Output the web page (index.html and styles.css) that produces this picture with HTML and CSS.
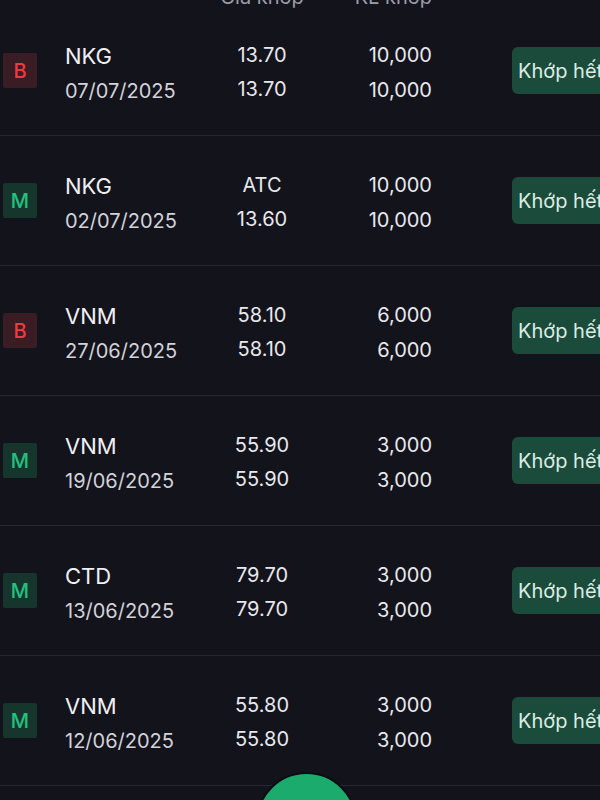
FILE: index.html
```html
<!DOCTYPE html>
<html lang="vi">
<head>
<meta charset="utf-8">
<link rel="stylesheet" href="styles.css">
</head>
<body>
<div class="screen">
  <div class="list">
    <div class="head">
      <span></span><span></span>
      <span class="h-price">Giá khớp</span>
      <span class="h-qty">KL khớp</span>
      <span></span>
    </div>

    <div class="row">
      <div class="cell-badge"><span class="badge buy">B</span></div>
      <div class="name"><div class="sym">NKG</div><div class="date">07/07/2025</div></div>
      <div class="price"><div>13.70</div><div>13.70</div></div>
      <div class="qty"><div>10,000</div><div>10,000</div></div>
      <div class="cell-btn"><span class="status">Khớp hết</span></div>
    </div>

    <div class="row">
      <div class="cell-badge"><span class="badge sell">M</span></div>
      <div class="name"><div class="sym">NKG</div><div class="date">02/07/2025</div></div>
      <div class="price"><div>ATC</div><div>13.60</div></div>
      <div class="qty"><div>10,000</div><div>10,000</div></div>
      <div class="cell-btn"><span class="status">Khớp hết</span></div>
    </div>

    <div class="row">
      <div class="cell-badge"><span class="badge buy">B</span></div>
      <div class="name"><div class="sym">VNM</div><div class="date">27/06/2025</div></div>
      <div class="price"><div>58.10</div><div>58.10</div></div>
      <div class="qty"><div>6,000</div><div>6,000</div></div>
      <div class="cell-btn"><span class="status">Khớp hết</span></div>
    </div>

    <div class="row">
      <div class="cell-badge"><span class="badge sell">M</span></div>
      <div class="name"><div class="sym">VNM</div><div class="date">19/06/2025</div></div>
      <div class="price"><div>55.90</div><div>55.90</div></div>
      <div class="qty"><div>3,000</div><div>3,000</div></div>
      <div class="cell-btn"><span class="status">Khớp hết</span></div>
    </div>

    <div class="row">
      <div class="cell-badge"><span class="badge sell">M</span></div>
      <div class="name"><div class="sym">CTD</div><div class="date">13/06/2025</div></div>
      <div class="price"><div>79.70</div><div>79.70</div></div>
      <div class="qty"><div>3,000</div><div>3,000</div></div>
      <div class="cell-btn"><span class="status">Khớp hết</span></div>
    </div>

    <div class="row">
      <div class="cell-badge"><span class="badge sell">M</span></div>
      <div class="name"><div class="sym">VNM</div><div class="date">12/06/2025</div></div>
      <div class="price"><div>55.80</div><div>55.80</div></div>
      <div class="qty"><div>3,000</div><div>3,000</div></div>
      <div class="cell-btn"><span class="status">Khớp hết</span></div>
    </div>

    <div class="row"></div>
  </div>
  <div class="fab"></div>
</div>
</body>
</html>
```

FILE: styles.css
```css
html, body {
  margin: 0;
  padding: 0;
  background: #13131c;
}
body {
  width: 600px;
  height: 800px;
  overflow: hidden;
  font-family: Inter, "Noto Sans", sans-serif;
  color: #e8e8ec;
}
.screen {
  position: relative;
  width: 600px;
  height: 800px;
  overflow: hidden;
}
.list {
  width: 640px;
}
.head,
.row {
  display: grid;
  grid-template-columns: 65px 147px 100px 120px 1fr;
  align-items: center;
}
.head {
  height: 18px;
  line-height: 18px;
  margin-top: -12px;
  font-size: 20px;
  color: #9c9ca6;
}
.h-price { text-align: center; }
.h-qty { text-align: right; }
.row {
  height: 129px;
  border-bottom: 1px solid #272731;
}
.cell-badge {
  display: flex;
  align-items: center;
  padding-left: 3px;
}
.badge {
  display: flex;
  align-items: center;
  justify-content: center;
  width: 34px;
  height: 35px;
  border-radius: 2px;
  font-size: 20px;
  font-weight: 500;
}
.badge.buy {
  background: #3a1c24;
  color: #f03a42;
}
.badge.sell {
  background: #16352d;
  color: #22c17f;
}
.name {
  padding-top: 7px;
  line-height: 35px;
}
.sym {
  font-size: 22px;
  color: #f0f0f3;
}
.date {
  font-size: 20px;
  color: #d2d2d8;
}
.price {
  text-align: center;
  font-size: 20px;
  line-height: 34px;
  padding-top: 3px;
  color: #e8e8ec;
}
.qty {
  text-align: right;
  font-size: 20px;
  line-height: 35px;
  padding-top: 4px;
  color: #e8e8ec;
}
.cell-btn {
  display: flex;
  align-items: center;
  padding-left: 80px;
}
.status {
  display: flex;
  align-items: center;
  height: 47px;
  padding: 0 14px 0 6px;
  border-radius: 6px;
  background: #1b4c3b;
  color: #dcece4;
  font-size: 20px;
  white-space: nowrap;
}
.fab {
  position: absolute;
  left: 256px;
  top: 772px;
  width: 97px;
  height: 97px;
  border-radius: 50%;
  background: #1aab6d;
  border: 2px solid #0c0c12;
  box-sizing: content-box;
}
```
